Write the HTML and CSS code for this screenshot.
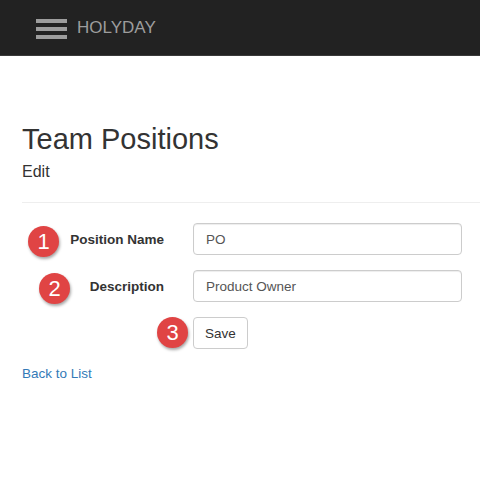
FILE: index.html
```html
<!DOCTYPE html>
<html>
<head>
<meta charset="utf-8">
<link rel="stylesheet" href="styles.css">
</head>
<body>
<header class="navbar">
  <span class="burger"><i></i><i></i><i></i></span>
  <span class="brand">HOLYDAY</span>
</header>
<main class="content">
  <h1 class="title">Team Positions</h1>
  <h4 class="subtitle">Edit</h4>
  <hr class="rule">
  <form class="form">
    <div class="row">
      <span class="badge badge-1">1</span>
      <label class="label">Position Name</label>
      <input class="input" type="text" value="PO">
    </div>
    <div class="row">
      <span class="badge badge-2">2</span>
      <label class="label">Description</label>
      <input class="input" type="text" value="Product Owner">
    </div>
    <div class="row">
      <span class="badge badge-3">3</span>
      <span class="label"></span>
      <button class="btn" type="button">Save</button>
    </div>
  </form>
  <a class="back" href="#">Back to List</a>
</main>
</body>
</html>
```
FILE: styles.css
```css
* { box-sizing: border-box; }
html, body { margin: 0; padding: 0; background: #fff; }
body {
  font-family: "Liberation Sans", Arial, sans-serif;
  font-size: 14px;
  color: #333;
}
.navbar {
  height: 56px;
  background: #222;
  border-bottom: 1px solid #3a3a3a;
  display: flex;
  align-items: center;
  padding-left: 36px;
}
.burger {
  display: flex;
  flex-direction: column;
  gap: 4px;
  width: 31px;
  margin-top: 2px;
}
.burger i {
  display: block;
  height: 4px;
  background: #9d9d9d;
}
.brand {
  margin-left: 10px;
  font-size: 17px;
  color: #9d9d9d;
  line-height: 20px;
}
.content {
  padding: 0 18px 0 22px;
}
.title {
  margin: 65px 0 0;
  font-size: 29px;
  font-weight: 400;
  line-height: 36px;
  color: #333;
}
.subtitle {
  margin: 5px 0 0;
  font-size: 16px;
  font-weight: 400;
  line-height: 20px;
  color: #333;
}
.rule {
  margin: 20px -18px 0 0;
  border: 0;
  border-top: 1px solid #eee;
}
.form {
  margin-top: 20px;
  display: flex;
  flex-direction: column;
  gap: 15px;
}
.row {
  position: relative;
  display: flex;
  align-items: center;
}
.label {
  width: 142px;
  text-align: right;
  font-weight: 700;
  font-size: 13.5px;
  margin-right: 29px;
}
.input {
  width: 269px;
  height: 32px;
  border: 1px solid #ccc;
  border-radius: 4px;
  padding: 6px 12px;
  font-family: inherit;
  font-size: 13.5px;
  color: #555;
  box-shadow: inset 0 1px 1px rgba(0,0,0,.075);
}
.btn {
  height: 32px;
  width: 55px;
  border: 1px solid #ccc;
  border-radius: 4px;
  background: #fff;
  font-family: inherit;
  font-size: 13.5px;
  color: #333;
  padding: 0;
}
.badge {
  position: absolute;
  width: 31px;
  height: 31px;
  border-radius: 50%;
  background: #e04444;
  color: #fff;
  font-size: 22px;
  line-height: 31px;
  text-align: center;
  box-shadow: 1px 2px 3px rgba(0,0,0,.35);
  top: 3px;
}
.badge-1 { left: 6px; }
.badge-2 { left: 17px; }
.badge-3 { left: 135px; top: 0; }
.back {
  display: inline-block;
  margin-top: 17px;
  color: #337ab7;
  text-decoration: none;
  font-size: 13.5px;
}
```
